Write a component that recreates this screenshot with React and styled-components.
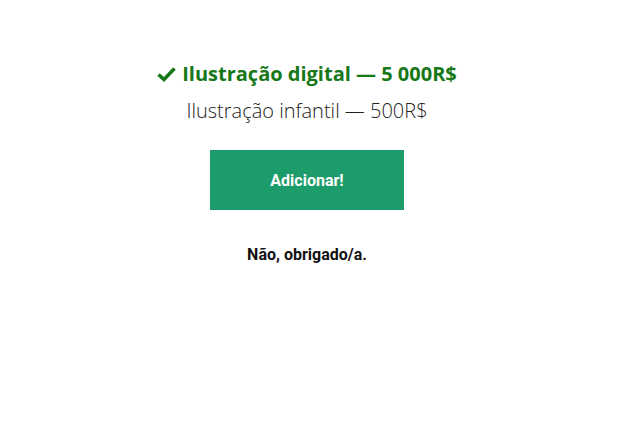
import React from 'react'
import styled, { createGlobalStyle } from 'styled-components'

const GlobalStyle = createGlobalStyle`
body {
  margin: 0;
  background: #fff;
}
`

const Page = styled.div`
  display: flex;
  flex-direction: column;
  align-items: center;
  padding: 60px 5px 0 0;
`

const Offer = styled.div`
  display: flex;
  align-items: center;
  gap: 6px;
  font-family: 'Open Sans', sans-serif;
  font-weight: 700;
  font-size: 20px;
  line-height: 28px;
  color: #177817;
`

const Alt = styled.div`
  margin-top: 9px;
  font-family: 'Open Sans', sans-serif;
  font-weight: 300;
  font-size: 20px;
  line-height: 28px;
  color: #222;
`

const AddButton = styled.button`
  margin-top: 25px;
  width: 194px;
  height: 60px;
  border: none;
  background: #1c9c6b;
  color: #fff;
  font-family: Roboto, sans-serif;
  font-weight: 700;
  font-size: 16px;
  cursor: pointer;
`

const Decline = styled.a`
  margin-top: 35px;
  font-family: Roboto, sans-serif;
  font-weight: 700;
  font-size: 16px;
  color: #111;
  cursor: pointer;
`

const Check = () => (
  <svg width="19" height="16" viewBox="0 0 19 16">
    <path d="M1.5 8.5 L7 13.5 L17.5 2.5" fill="none" stroke="currentColor" strokeWidth="3.6" />
  </svg>
)

export default function App() {
  return (
    <>
      <GlobalStyle />
      <Page>
        <Offer>
          <Check />
          Ilustração digital — 5 000R$
        </Offer>
        <Alt>Ilustração infantil — 500R$</Alt>
        <AddButton>Adicionar!</AddButton>
        <Decline>Não, obrigado/a.</Decline>
      </Page>
    </>
  )
}
